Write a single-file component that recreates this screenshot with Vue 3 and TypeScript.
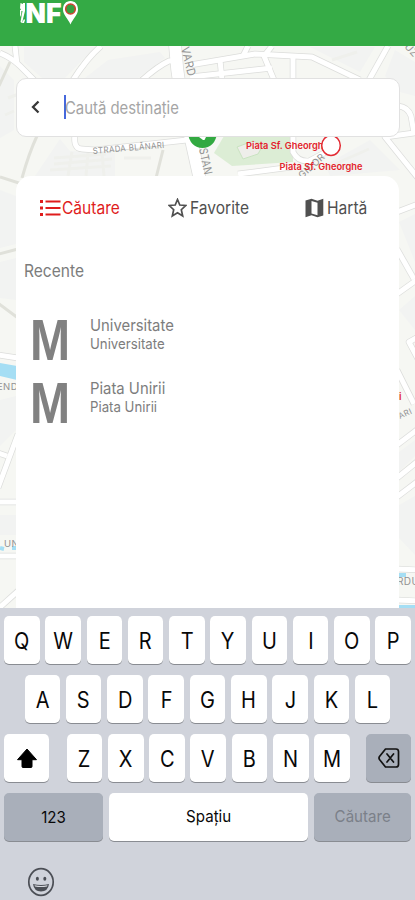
<script setup lang="ts">
interface Station {
  name: string
  area: string
}

const stations: Station[] = [
  { name: 'Universitate', area: 'Universitate' },
  { name: 'Piata Unirii', area: 'Piata Unirii' },
]

const topRow: string[] = [...'QWERTYUIOP']
const homeRow: string[] = [...'ASDFGHJKL']
const bottomRow: string[] = [...'ZXCVBNM']

const roads: string[] = [
  'M0 53Q12 58 20 66L36 82',
  'M15 46L17 64',
  'M101 46Q87 58 73 80',
  'M141 81Q158 66 169 61L182 60',
  'M190 65L255 54L312 57L360 80',
  'M190 77L272 68',
  'M220 60L222 80',
  'M272 46L264 56L274 80',
  'M248 46L243 56',
  'M293 57V80',
  'M388 46L369 80',
  'M398 106Q408 107 411 116L414 133L385 137L418 178',
  'M75 134Q73 149 82 149L95 150L187 140',
  'M293 134V152Q298 162 309 161L326 152L338 140',
  'M238 174L292 167',
  'M-2 355L18 358',
  'M-2 453L7 456M18 434L-2 488',
  'M-2 502H18',
  'M-2 556H18',
  'M18 591L-2 609',
  'M397 212L418 204',
  'M397 249L414 279',
  'M397 294L418 279',
  'M418 337L409 342L418 359',
  'M397 370L414 404',
  'M397 445L418 429',
  'M397 478L418 461M397 497L418 481',
  'M397 569L418 570',
  'M397 600L418 601',
]
</script>

<template>
  <main class="screen">
    <svg class="map" viewBox="0 0 415 562" width="415" height="562" aria-hidden="true">
      <g transform="translate(0 -46)">
        <rect y="46" width="415" height="562" fill="#f6f7f3" />
        <path
          d="M24 47H95L65 78H42L24 62ZM108 60L160 52L165 58L138 78H85ZM0 66L14 80V130L0 138ZM310 47H375L360 72L320 52ZM395 50L415 62V96L400 92L385 76ZM60 139L70 151L115 153V176H35ZM325 165L370 140L400 170L330 176ZM0 190L16 196V244L0 248ZM0 262L16 258V300L0 298ZM0 400L16 396V430L0 446ZM399 222L415 214V262ZM399 310L415 296V330ZM399 452L415 440V456L399 472ZM399 505L415 496V555L399 538ZM0 515H16V535H0Z"
          fill="#f2f3f2"
        />
        <path
          d="M8 98L24 92M5 115L14 111M54 158L106 154M54 164L112 159M50 170L111 166M72 152L68 176M88 153L86 176M102 153L104 176M124 158H151M332 60L357 52M335 164L369 149"
          fill="none" stroke="#eff0ec" stroke-width="3"
        />
        <path d="M224 136H293V162L232 166L214 153Z" fill="#dcedd5" />
        <path d="M237 147L253 141L263 145L258 154L243 159Z" fill="#eeeeea" stroke="#c9e3c1" />
        <path
          d="M37 136Q29 153 22 178M0 177L22 184M163 150L156 178M-1 254L18 249M-1 304L18 318M10 62L-1 86"
          fill="none" stroke="#e0e1da" stroke-width="3"
        />
        <path d="M0 363L17 366V380L0 376Z" fill="#a5def4" />
        <path d="M0 548L4 549M12 548H17M399 575H406M399 607H416" fill="none" stroke="#a5def4" stroke-width="4" />
        <path v-for="road in roads" :key="road" :d="road" class="road-edge" />
        <path d="M175 44Q178 92 190 135L200 180" class="road-edge wide" />
        <path v-for="road in roads" :key="`fill-${road}`" :d="road" class="road" />
        <path d="M175 44Q178 92 190 135L200 180" class="road wide" />
        <g class="street">
          <text x="93" y="154" transform="rotate(-5 93 154)" textLength="72" lengthAdjust="spacingAndGlyphs">STRADA BLĂNARI</text>
          <text x="181" y="48" transform="rotate(76 181 48)" font-size="11.500" textLength="30" lengthAdjust="spacingAndGlyphs">VARD</text>
          <text x="199" y="149" transform="rotate(78 199 149)" font-size="11.500" textLength="27" lengthAdjust="spacingAndGlyphs">STAN</text>
          <text x="302" y="179" transform="rotate(-42 302 179)" font-size="9.500">GIDOR</text>
          <text x="404" y="47" transform="rotate(48 404 47)" font-size="10">UZ</text>
          <text x="-3" y="390" font-size="9.500">END</text>
          <text x="4" y="547" font-size="9.500">UN</text>
          <text x="400" y="419" transform="rotate(-25 400 419)" font-size="8">ARI</text>
          <text x="397" y="585" font-size="10">RDU</text>
        </g>
        <circle cx="202.500" cy="134" r="14" fill="#32a941" />
        <path d="M199 137H206L204.500 140H203Z" fill="#fff" />
        <g class="stop">
          <text x="246" y="149" textLength="83" lengthAdjust="spacingAndGlyphs">Piata Sf. Gheorghe</text>
          <text x="279.500" y="170" textLength="83" lengthAdjust="spacingAndGlyphs">Piata Sf. Gheorghe</text>
          <text x="399" y="400">i</text>
        </g>
        <ellipse cx="331" cy="145.500" rx="9.300" ry="10" fill="#fff" stroke="#e32b34" stroke-width="1.500" />
      </g>
    </svg>

    <header class="brand-bar">
      <svg class="brand" width="62" height="28" viewBox="0 0 62 28" role="img" aria-label="INFO">
        <path d="M1.500 3L4 4V3H6V11H2.500L1 8ZM1 10H2.500L2 17L1 15ZM3.500 11H6L3 23L1.500 22ZM5 19L6 20L5 23H3Z" fill="#fff" />
        <text x="6.500" y="23" textLength="36" lengthAdjust="spacingAndGlyphs">NF</text>
        <path d="M51.500 1C46.800 1 44 4.500 44 9.500C44 15 49 18.500 51.500 24.500C54 18.500 59 15 59 9.500C59 4.500 56.200 1 51.500 1Z" fill="#fff" />
        <ellipse cx="51.500" cy="9" rx="4.800" ry="5" fill="#379f40" stroke="#cf432f" stroke-width="1.600" />
      </svg>
    </header>

    <section class="search">
      <svg width="10" height="14" viewBox="0 0 10 14"><path d="M7.500 1.500L2 7L7.500 12.500" fill="none" stroke="#383838" stroke-width="2.300" /></svg>
      <div class="field"><span class="type placeholder">Caută destinație</span></div>
    </section>

    <section class="panel">
      <nav class="tabs">
        <div class="tab active">
          <svg width="22" height="18" viewBox="0 0 22 18">
            <path d="M5.500 2.500H20.500M5.500 9H20.500M5.500 15.500H20.500" stroke="currentColor" stroke-width="2" />
            <path d="M0 2.500H3M0 9H3M0 15.500H3" stroke="currentColor" stroke-width="2.900" />
          </svg>
          <span class="type">Căutare</span>
        </div>
        <div class="tab favorite">
          <svg width="19" height="20" viewBox="0 0 19 20"><path d="M9.500 1.500L11.800 7L17.700 7.500L13.300 11.700L14.700 18L9.500 14.800L4.300 18L5.700 11.700L1.300 7.500L7.200 7Z" fill="none" stroke="currentColor" stroke-width="1.700" /></svg>
          <span class="type">Favorite</span>
        </div>
        <div class="tab places">
          <svg width="19" height="20" viewBox="0 0 19 20"><path fill-rule="evenodd" d="M.5 2.500L6.500.8L12.500 2.700L18.300.8V17.500L12.500 19.300L6.500 17.300L.5 19.300ZM6.500 3V15.400L12.500 17.300V4.800Z" fill="currentColor" /></svg>
          <span class="type">Hartă</span>
        </div>
      </nav>

      <h2 class="type heading">Recente</h2>
      <ul class="results">
        <li v-for="station in stations" :key="station.name" class="result">
          <span class="metro">M</span>
          <div class="details">
            <span class="type name">{{ station.name }}</span>
            <span class="type area">{{ station.area }}</span>
          </div>
        </li>
      </ul>
    </section>

    <section class="keyboard">
      <div class="keys">
        <div v-for="letter in topRow" :key="letter" class="key letter"><span class="type">{{ letter }}</span></div>
      </div>
      <div class="keys home">
        <div v-for="letter in homeRow" :key="letter" class="key letter"><span class="type">{{ letter }}</span></div>
      </div>
      <div class="keys">
        <div class="key side">
          <svg width="22" height="20" viewBox="0 0 22 20"><path d="M11 1L20.500 11.700H16V18.500Q16 19.500 15 19.500H7Q6 19.500 6 18.500V11.700H1.500Z" fill="#000" stroke="#000" stroke-linejoin="round" /></svg>
        </div>
        <div class="bottom-letters">
          <div v-for="letter in bottomRow" :key="letter" class="key letter"><span class="type">{{ letter }}</span></div>
        </div>
        <div class="key side gray">
          <svg width="22" height="20" viewBox="0 0 22 20" fill="none" stroke="#111" stroke-width="1.700" stroke-linecap="round" stroke-linejoin="round"><path d="M7.500 1H18Q20.500 1 20.500 3.500V16.500Q20.500 19 18 19H7.500L1.500 11.500Q.5 10 1.500 8.500ZM9 6L15.500 14M15.500 6L9 14" /></svg>
        </div>
      </div>
      <div class="keys">
        <div class="key gray numbers"><span class="type">123</span></div>
        <div class="key space"><span class="type">Spațiu</span></div>
        <div class="key gray submit"><span class="type">Căutare</span></div>
      </div>
      <svg class="emoji" width="28" height="30" viewBox="0 0 28 30">
        <ellipse cx="14" cy="15" rx="12.200" ry="13.300" fill="none" stroke="#4b4e55" stroke-width="1.700" />
        <ellipse cx="10.400" cy="11.700" rx="1.500" ry="2" fill="#4b4e55" />
        <ellipse cx="17.800" cy="11.700" rx="1.500" ry="2" fill="#4b4e55" />
        <path d="M6 17Q14 19 22 17Q21 24.500 14 24.500Q7 24.500 6 17Z" fill="#4b4e55" />
        <path d="M7.500 18.300Q14 19.700 20.500 18.300L20 19.500Q14 20.700 8 19.500Z" fill="#d7d9df" />
      </svg>
    </section>
  </main>
</template>

<style>
body {
  margin: 0;
}
</style>

<style scoped>
.screen {
  position: relative;
  display: flex;
  flex-direction: column;
  width: 415px;
  height: 900px;
  overflow: hidden;
  font-family: Inter, "Liberation Sans", sans-serif;
  box-sizing: border-box;
}

.screen * {
  box-sizing: border-box;
}

.map {
  position: absolute;
  top: 46px;
  left: 0;
}

.road,
.road-edge {
  fill: none;
  stroke: #fff;
  stroke-width: 5px;
  stroke-linejoin: round;
}

.road-edge {
  stroke: #dcdddb;
  stroke-width: 6.4px;
}

.road.wide {
  stroke-width: 12px;
}

.road-edge.wide {
  stroke-width: 13.4px;
}

.street {
  fill: #929292;
  font-size: 8.5px;
  letter-spacing: 0.4px;
}

.stop {
  fill: #e3232c;
  font-size: 9.5px;
  font-weight: 600;
}

.brand-bar {
  position: relative;
  flex: none;
  height: 46px;
  padding-left: 18.500px;
  background: #34aa45;
}

.brand {
  display: block;
}

.brand text {
  fill: #fff;
  font-size: 27.500px;
  font-weight: 900;
}

.type {
  display: inline-block;
  white-space: nowrap;
  transform: scaleX(0.915);
  transform-origin: left center;
}

.search {
  position: relative;
  display: flex;
  flex: none;
  align-items: center;
  gap: 23px;
  height: 59px;
  margin: 31.500px 15.500px 0;
  padding-left: 14.500px;
  border: 1px solid #e1e1e1;
  border-radius: 10px;
  background: #fff;
}

.field {
  display: flex;
  align-items: center;
  height: 24px;
  border-left: 2px solid #4668dc;
  color: #a5a5a5;
  font-size: 17px;
}

.placeholder {
  margin: 1px 0 0 -1px;
  transform: scaleX(0.875);
}

.panel {
  position: relative;
  flex: none;
  height: 432px;
  margin: 39.500px 16px 0;
  border-radius: 15px 15px 0 0;
  background: #fff;
}

.tabs {
  display: grid;
  grid-template-columns: 128px 137px 1fr;
  height: 64px;
  padding-left: 24px;
  color: #505050;
  font-size: 17px;
}

.tab {
  display: flex;
  align-items: center;
  gap: 3px;
}

.tab svg {
  flex: none;
}

.tab.active {
  gap: 0;
  color: #df1c1c;
}

.heading {
  display: block;
  margin: 20px 0 0 8px;
  color: #7c7c7c;
  font-size: 17px;
  font-weight: 400;
  line-height: 22px;
}

.results {
  display: grid;
  grid-auto-rows: 63px;
  margin: 26px 0 0;
  padding: 0;
  list-style: none;
}

.result {
  display: flex;
  align-items: center;
  padding-left: 12px;
}

.metro {
  flex: none;
  width: 62px;
  color: #818181;
  font-family: "Liberation Sans", sans-serif;
  font-size: 58px;
  font-weight: 700;
  line-height: 63px;
  transform: scaleX(0.86);
  transform-origin: left center;
}

.metro {
  -webkit-text-stroke: 0;
  padding-left: 0.500px;
  transform: translateX(1.500px) scaleX(0.83);
}

.details {
  display: flex;
  flex-direction: column;
  height: 49px;
  color: #7d7d7d;
}

.name {
  font-size: 16.500px;
  line-height: 20px;
  transform: scaleX(0.9);
}

.area {
  font-size: 14.700px;
  line-height: 18px;
  transform: scaleX(0.9);
}

.keyboard {
  position: relative;
  display: flex;
  flex: 1;
  flex-direction: column;
  gap: 11px;
  padding: 8px 4px 0;
  background: #d0d3db;
}

.keys {
  display: flex;
  flex: none;
  justify-content: space-between;
  gap: 5.700px;
  height: 48px;
}

.keys.home {
  padding: 0 20.500px;
}

.bottom-letters {
  display: flex;
  gap: 5.700px;
  padding-left: 1.500px;
}

.key {
  display: flex;
  align-items: center;
  justify-content: center;
  border-radius: 5px;
  background: #fff;
  box-shadow: 0 1px 0 #898c92;
  color: #080808;
  font-size: 16.500px;
}

.key .type {
  transform-origin: center;
}

.letter {
  flex: none;
  width: 35.570px;
  font-size: 22.500px;
}

.letter .type {
  transform: scaleX(0.89);
}

.side {
  width: 45px;
}

.gray {
  background: #a9afba;
}

.numbers {
  width: 99px;
}

.space {
  width: 200px;
  padding-bottom: 3px;
}

.submit {
  width: 97px;
  padding-bottom: 3px;
  color: #7b8089;
}

.emoji {
  margin: 15px 0 0 23px;
}
</style>
